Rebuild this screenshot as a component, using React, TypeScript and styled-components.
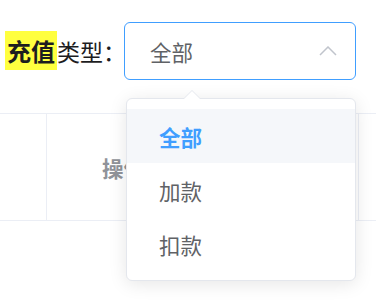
import React from "react";
import styled, { createGlobalStyle } from "styled-components";

const Global = createGlobalStyle`
  html, body { margin: 0; padding: 0; background: #fff; }
  body { font-family: "Noto Sans CJK SC", "Noto Sans", sans-serif; }
  #root { width: 376px; height: 302px; overflow: hidden; position: relative; }
`;

const Page = styled.div`
  position: relative;
  width: 376px;
  height: 302px;
`;

const FormRow = styled.div`
  display: flex;
  align-items: center;
  padding: 22px 0 0 7px;
  height: 58px;
`;

const Label = styled.label`
  font-size: 23px;
  line-height: 34px;
  color: #1d1d1f;
  width: 117px;
  white-space: nowrap;
`;

const Mark = styled.mark`
  background: #ffff3f;
  color: #1d1d1f;
  font-weight: 700;
  margin-left: -2px;
  padding: 2px 2px 2px 2px;
  font-size: 24px;
`;

const SelectBox = styled.div`
  box-sizing: border-box;
  width: 232px;
  height: 58px;
  border: 1px solid #409eff;
  border-radius: 6px;
  display: flex;
  align-items: center;
  justify-content: space-between;
  padding: 0 18px 0 25px;
  font-size: 21.5px;
  color: #606266;
`;

const Table = styled.div`
  margin-top: 33px;
  border-top: 1px solid #ebeef5;
  border-bottom: 1px solid #ebeef5;
  display: grid;
  grid-template-columns: 47px 312px 1fr;
  height: 106px;
`;

const Cell = styled.div<{ $right?: boolean }>`
  border-right: ${(p) => (p.$right ? "1px solid #ebeef5" : "none")};
  display: flex;
  align-items: center;
  padding-left: ${(p) => (p.$right ? "55px" : "0")};
  font-size: 21.5px;
  font-weight: 700;
  color: #909399;
`;

const FirstCell = styled.div`
  border-right: 1px solid #ebeef5;
`;

const Dropdown = styled.div`
  position: absolute;
  left: 126px;
  top: 98px;
  width: 230px;
  height: 183px;
  box-sizing: border-box;
  background: #fff;
  border: 1px solid #e4e7ed;
  border-radius: 6px;
  box-shadow: 0 3px 18px 0 rgba(0, 0, 0, 0.1);
  padding: 10px 0;
`;

const Arrow = styled.div`
  position: absolute;
  top: -9px;
  left: 56px;
  width: 0;
  height: 0;
  border-left: 9px solid transparent;
  border-right: 9px solid transparent;
  border-bottom: 9px solid #e4e7ed;
  &::after {
    content: "";
    position: absolute;
    left: -8px;
    top: 1px;
    border-left: 8px solid transparent;
    border-right: 8px solid transparent;
    border-bottom: 8px solid #fff;
  }
`;

const Item = styled.div<{ $active?: boolean }>`
  height: 54px;
  display: flex;
  align-items: center;
  padding-left: 32px;
  font-size: 21.5px;
  color: ${(p) => (p.$active ? "#409eff" : "#606266")};
  font-weight: ${(p) => (p.$active ? 700 : 400)};
  background: ${(p) => (p.$active ? "#f5f7fa" : "#fff")};
`;

const Chevron = () => (
  <svg width="18" height="10" viewBox="0 0 18 10">
    <path d="M1 9 L9 1 L17 9" fill="none" stroke="#c0c4cc" strokeWidth="1.5" />
  </svg>
);

export default function App() {
  return (
    <Page>
      <Global />
      <FormRow>
        <Label>
          <Mark>充值</Mark>类型：
        </Label>
        <SelectBox>
          <span>全部</span>
          <Chevron />
        </SelectBox>
      </FormRow>
      <Table>
        <FirstCell />
        <Cell $right>操作</Cell>
        <div />
      </Table>
      <Dropdown>
        <Arrow />
        <Item $active>全部</Item>
        <Item>加款</Item>
        <Item>扣款</Item>
      </Dropdown>
    </Page>
  );
}
